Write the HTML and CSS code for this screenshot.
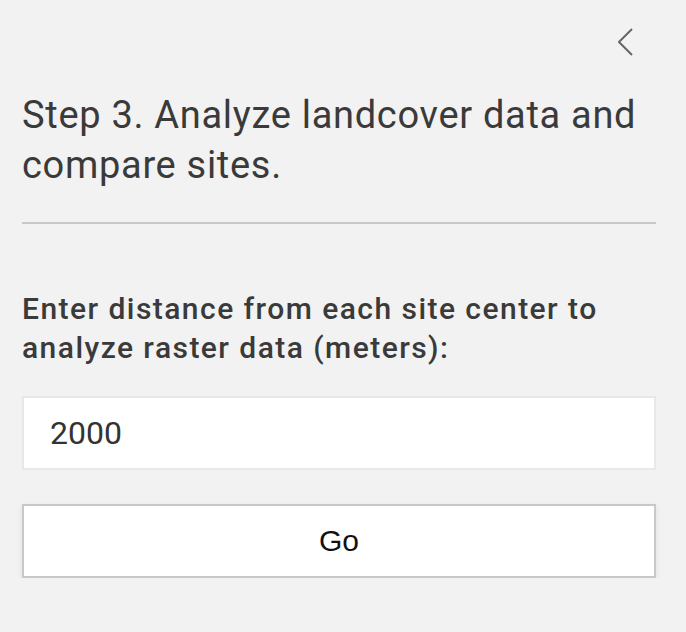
FILE: index.html
```html
<!DOCTYPE html>
<html lang="en">
<head>
<meta charset="utf-8">
<title>Step 3</title>
<link rel="stylesheet" href="styles.css">
</head>
<body>
<div class="panel">
  <div class="topbar">
    <button class="back" aria-label="Back">
      <svg width="16" height="28" viewBox="0 0 16 28"><polyline points="14,1 1,14 14,27" fill="none" stroke="#666" stroke-width="2"/></svg>
    </button>
  </div>
  <h1 class="title">Step 3. Analyze landcover data and compare sites.</h1>
  <hr class="divider">
  <label class="label" for="dist">Enter distance from each site center to analyze raster data (meters):</label>
  <input class="field" id="dist" type="text" value="2000">
  <button class="go">Go</button>
</div>
</body>
</html>
```
FILE: styles.css
```css
html, body {
  margin: 0;
  padding: 0;
  background: #f2f2f2;
}
.panel {
  width: 634px;
  padding: 0 30px 0 22px;
  display: flex;
  flex-direction: column;
  font-family: Roboto, "Noto Sans", sans-serif;
  color: #3a3a3a;
}
.topbar {
  height: 90px;
  display: flex;
  justify-content: flex-end;
  align-items: flex-start;
}
.back {
  margin-top: 28px;
  margin-right: 22px;
  padding: 0;
  border: 0;
  background: none;
  width: 16px;
  height: 28px;
  display: block;
}
.back svg { display: block; }
.title {
  margin: 0;
  font-size: 38px;
  font-weight: 400;
  letter-spacing: 0.7px;
  line-height: 50px;
}
.divider {
  margin: 32px 0 0;
  border: 0;
  height: 2px;
  background: #c8c8c8;
}
.label {
  margin-top: 65px;
  font-size: 30px;
  font-weight: 500;
  letter-spacing: 1.45px;
  line-height: 39px;
  display: block;
}
.field {
  margin-top: 29px;
  box-sizing: border-box;
  height: 74px;
  width: 100%;
  border: 2px solid #e8e8e8;
  background: #fff;
  padding: 0 0 0 26px;
  font-family: Roboto, "Noto Sans", sans-serif;
  font-size: 32px;
  color: #333;
  outline: none;
}
.go {
  margin-top: 34px;
  box-sizing: border-box;
  height: 74px;
  width: 100%;
  border: 2px solid #c8c8c8;
  background: #fff;
  box-shadow: 0 2px 6px rgba(0,0,0,0.08);
  font-family: "Liberation Sans", Arial, sans-serif;
  font-size: 30px;
  color: #111;
  padding: 0;
}
```
